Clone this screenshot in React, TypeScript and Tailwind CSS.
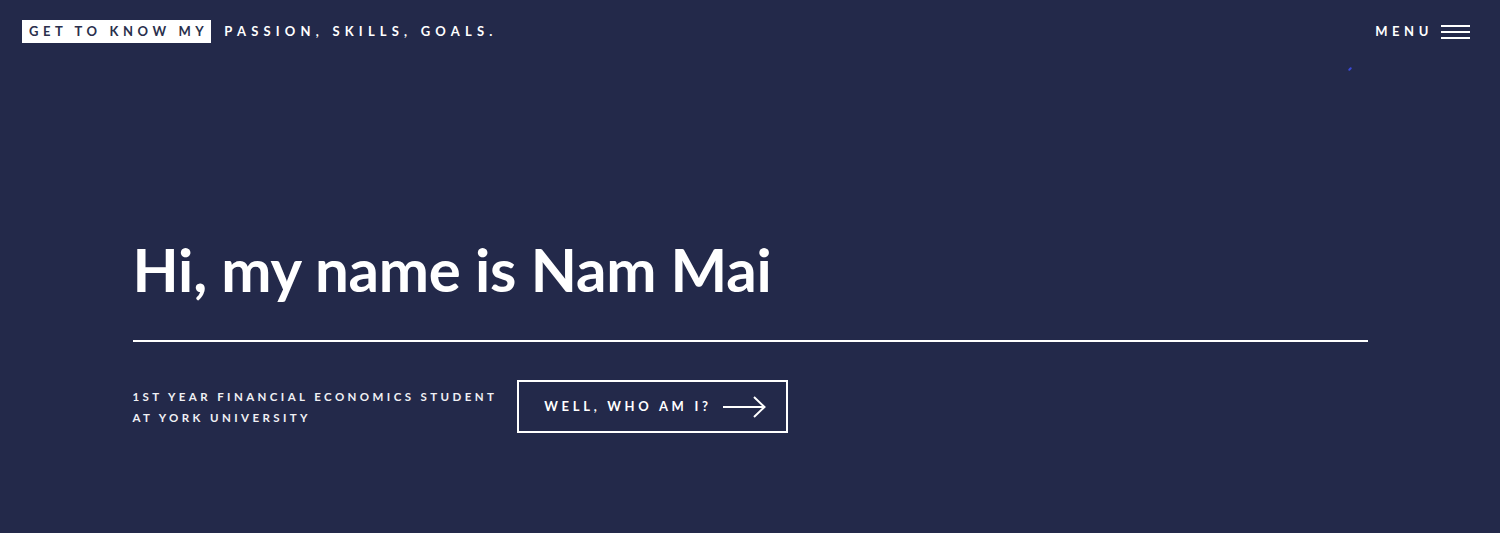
export default function App() {
  const font = { fontFamily: "Lato, 'Open Sans', sans-serif" };
  return (
    <div className="relative h-[533px] w-full overflow-hidden bg-[#23294a] text-white" style={font}>
      <header className="flex items-center justify-between pl-[22px] pr-[30px] pt-[20px]">
        <div className="flex items-center">
          <span className="flex h-[23px] items-center bg-white pl-[7px] pr-[3px] text-[13px] font-bold tracking-[4.6px] text-[#2a2f4c]">
            GET TO KNOW MY
          </span>
          <span className="ml-[13px] text-[13px] font-bold tracking-[5.2px] text-white">
            PASSION, SKILLS, GOALS.
          </span>
        </div>
        <div className="flex items-center">
          <span className="text-[13px] font-bold tracking-[4.6px]">MENU</span>
          <div className="ml-[8px] flex w-[29px] flex-col gap-[4px]">
            <span className="h-[2px] w-full bg-white" />
            <span className="h-[2px] w-full bg-white" />
            <span className="h-[2px] w-full bg-white" />
          </div>
        </div>
      </header>
      <span className="absolute left-[1349px] top-[67px] h-[4px] w-[2px] rotate-45 rounded-full bg-[#3b49d8]" />
      <main className="mx-auto mt-[188px] w-[1235px]">
        <h1 className="text-[60px] font-bold leading-[76px] tracking-[-0.2px]">Hi, my name is Nam Mai</h1>
        <div className="mt-[33px] h-[2px] w-full bg-white" />
        <div className="mt-[38px] flex items-center">
          <p className="text-[11.5px] font-bold leading-[21px] tracking-[3.4px] text-[#f0f0f4]">
            1ST YEAR FINANCIAL ECONOMICS STUDENT
            <br />
            AT YORK UNIVERSITY
          </p>
          <button className="ml-[20px] flex h-[53px] w-[271px] items-center border-2 border-white pl-[25px]">
            <span className="text-[13px] font-bold tracking-[3.7px]">WELL, WHO AM I?</span>
            <svg className="ml-[11px]" width="43" height="22" viewBox="0 0 43 22" fill="none" stroke="white" strokeWidth="2">
              <path d="M0 11 H41" />
              <path d="M31 1 L41.5 11 L31 21" />
            </svg>
          </button>
        </div>
      </main>
    </div>
  );
}
